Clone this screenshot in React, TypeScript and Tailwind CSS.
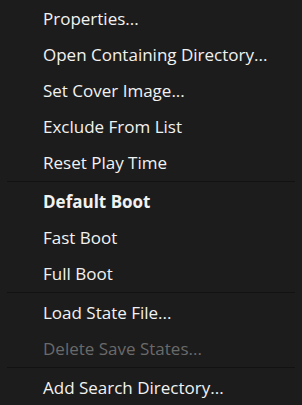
import React from "react";

type Item = { label: string; bold?: boolean; disabled?: boolean } | "sep";

const items: Item[] = [
  { label: "Properties..." },
  { label: "Open Containing Directory..." },
  { label: "Set Cover Image..." },
  { label: "Exclude From List" },
  { label: "Reset Play Time" },
  "sep",
  { label: "Default Boot", bold: true },
  { label: "Fast Boot" },
  { label: "Full Boot" },
  "sep",
  { label: "Load State File..." },
  { label: "Delete Save States...", disabled: true },
  "sep",
  { label: "Add Search Directory..." },
];

export default function App() {
  return (
    <div
      className="w-[302px] h-[405px] bg-[#1c1c1c] flex flex-col overflow-hidden"
      style={{ fontFamily: '"Open Sans", "Noto Sans", sans-serif' }}
    >
      {items.map((it, i) =>
        it === "sep" ? (
          <div key={i} className="h-[3px] flex items-center px-[7px]">
            <div className="h-px w-full bg-[#121212]" />
          </div>
        ) : (
          <div
            key={i}
            className={
              "h-[36px] flex items-center pl-[43px] text-[17px] leading-none " +
              (it.bold ? "font-bold " : "") +
              (it.disabled ? "text-[#6a6a6a]" : "text-[#f2f2f2]")
            }
          >
            {it.label}
          </div>
        )
      )}
    </div>
  );
}
